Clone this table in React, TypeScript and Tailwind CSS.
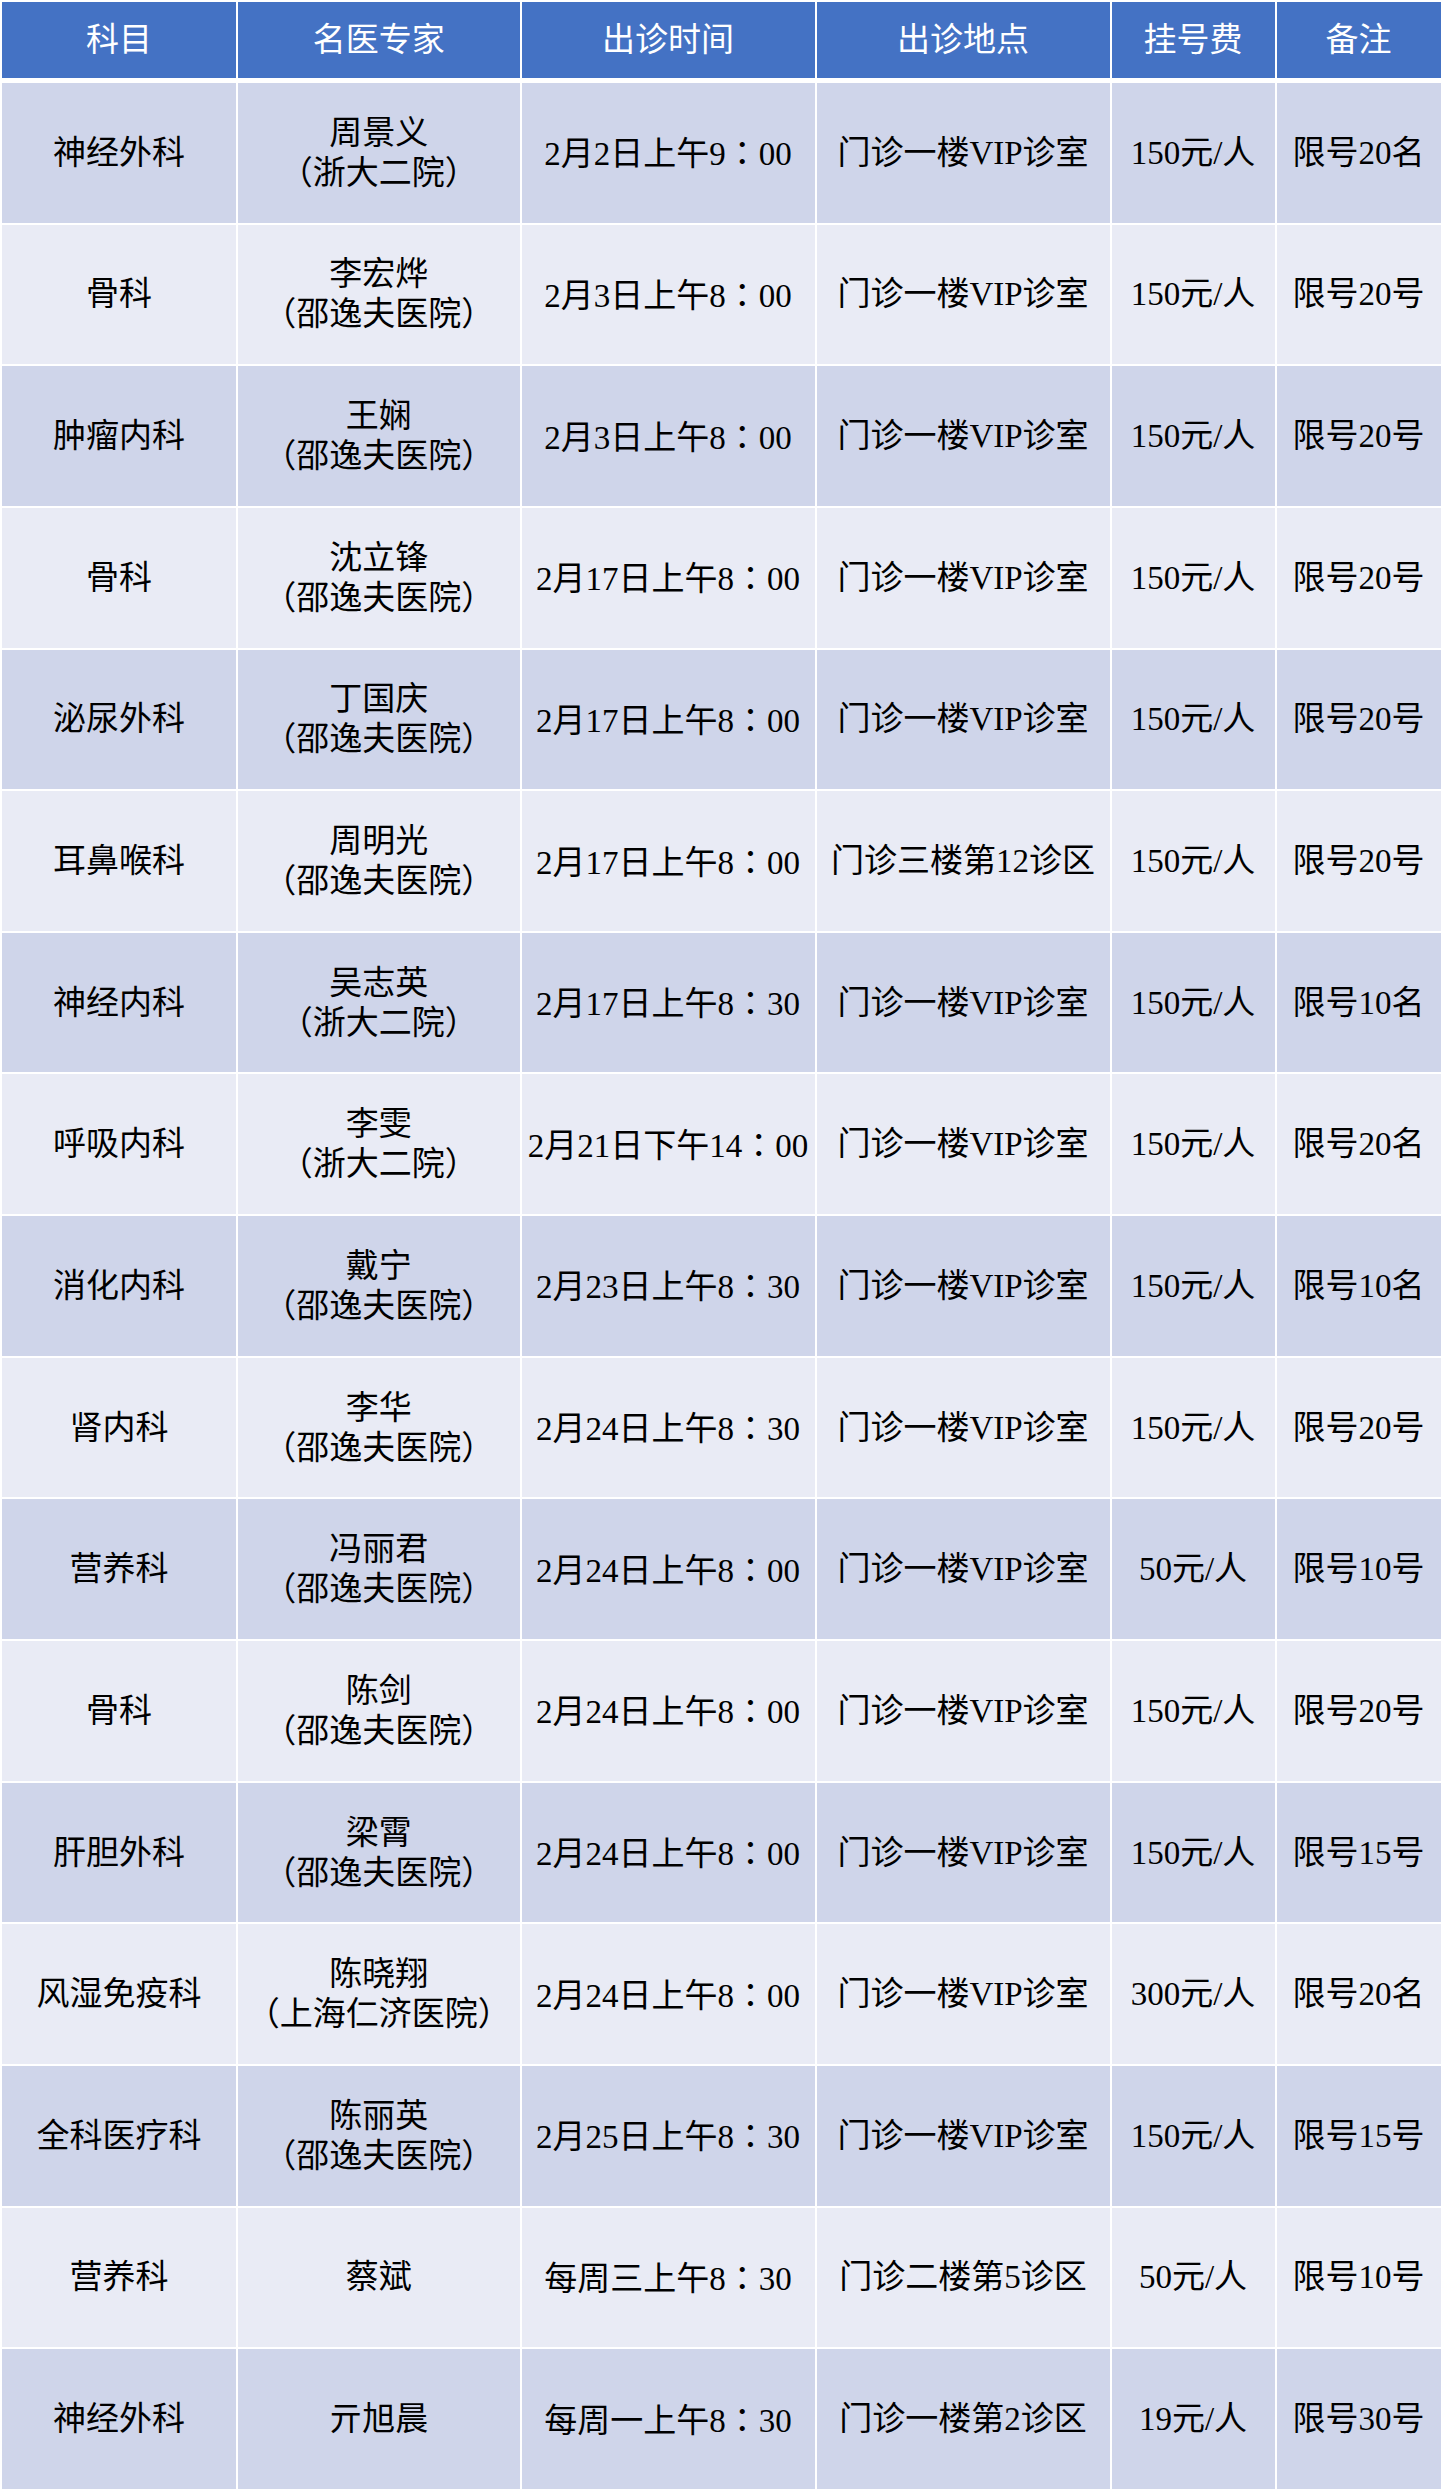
import React from 'react';

type Row = {
  dept: string;
  doctor: string;
  hospital?: string;
  time: string;
  place: string;
  fee: string;
  note: string;
};

const headers = ['科目', '名医专家', '出诊时间', '出诊地点', '挂号费', '备注'];

const rows: Row[] = [
  { dept: '神经外科', doctor: '周景义', hospital: '（浙大二院）', time: '2月2日上午9：00', place: '门诊一楼VIP诊室', fee: '150元/人', note: '限号20名' },
  { dept: '骨科', doctor: '李宏烨', hospital: '（邵逸夫医院）', time: '2月3日上午8：00', place: '门诊一楼VIP诊室', fee: '150元/人', note: '限号20号' },
  { dept: '肿瘤内科', doctor: '王娴', hospital: '（邵逸夫医院）', time: '2月3日上午8：00', place: '门诊一楼VIP诊室', fee: '150元/人', note: '限号20号' },
  { dept: '骨科', doctor: '沈立锋', hospital: '（邵逸夫医院）', time: '2月17日上午8：00', place: '门诊一楼VIP诊室', fee: '150元/人', note: '限号20号' },
  { dept: '泌尿外科', doctor: '丁国庆', hospital: '（邵逸夫医院）', time: '2月17日上午8：00', place: '门诊一楼VIP诊室', fee: '150元/人', note: '限号20号' },
  { dept: '耳鼻喉科', doctor: '周明光', hospital: '（邵逸夫医院）', time: '2月17日上午8：00', place: '门诊三楼第12诊区', fee: '150元/人', note: '限号20号' },
  { dept: '神经内科', doctor: '吴志英', hospital: '（浙大二院）', time: '2月17日上午8：30', place: '门诊一楼VIP诊室', fee: '150元/人', note: '限号10名' },
  { dept: '呼吸内科', doctor: '李雯', hospital: '（浙大二院）', time: '2月21日下午14：00', place: '门诊一楼VIP诊室', fee: '150元/人', note: '限号20名' },
  { dept: '消化内科', doctor: '戴宁', hospital: '（邵逸夫医院）', time: '2月23日上午8：30', place: '门诊一楼VIP诊室', fee: '150元/人', note: '限号10名' },
  { dept: '肾内科', doctor: '李华', hospital: '（邵逸夫医院）', time: '2月24日上午8：30', place: '门诊一楼VIP诊室', fee: '150元/人', note: '限号20号' },
  { dept: '营养科', doctor: '冯丽君', hospital: '（邵逸夫医院）', time: '2月24日上午8：00', place: '门诊一楼VIP诊室', fee: '50元/人', note: '限号10号' },
  { dept: '骨科', doctor: '陈剑', hospital: '（邵逸夫医院）', time: '2月24日上午8：00', place: '门诊一楼VIP诊室', fee: '150元/人', note: '限号20号' },
  { dept: '肝胆外科', doctor: '梁霄', hospital: '（邵逸夫医院）', time: '2月24日上午8：00', place: '门诊一楼VIP诊室', fee: '150元/人', note: '限号15号' },
  { dept: '风湿免疫科', doctor: '陈晓翔', hospital: '（上海仁济医院）', time: '2月24日上午8：00', place: '门诊一楼VIP诊室', fee: '300元/人', note: '限号20名' },
  { dept: '全科医疗科', doctor: '陈丽英', hospital: '（邵逸夫医院）', time: '2月25日上午8：30', place: '门诊一楼VIP诊室', fee: '150元/人', note: '限号15号' },
  { dept: '营养科', doctor: '蔡斌', time: '每周三上午8：30', place: '门诊二楼第5诊区', fee: '50元/人', note: '限号10号' },
  { dept: '神经外科', doctor: '亓旭晨', time: '每周一上午8：30', place: '门诊一楼第2诊区', fee: '19元/人', note: '限号30号' },
];

const cols = 'grid grid-cols-[234px_281.5px_293px_293px_163px_164px] gap-x-[2px]';

// full-width colon drawn with the JP face so it sits centred like the original
const Time = ({ value }: { value: string }) => {
  const [before, after] = value.split('：');
  return (
    <span>
      {before}
      <span className="font-['Noto_Sans_CJK_JP']">：</span>
      {after}
    </span>
  );
};

const App: React.FC = () => {
  return (
    <div className="w-[1443px] bg-white p-[2px] font-['Liberation_Serif','Noto_Sans_CJK_SC',serif] text-[33px] leading-[40px] text-black">
      <div className="flex flex-col gap-[2px]">
        <div className={`${cols} mb-[3px]`}>
          {headers.map((h) => (
            <div key={h} className="h-[76px] flex items-center justify-center bg-[#4472c4] text-white">
              {h}
            </div>
          ))}
        </div>
        {rows.map((r, i) => {
          const bg = i % 2 === 0 ? 'bg-[#cfd5ea]' : 'bg-[#e9ebf5]';
          const cell = `h-[139.65px] flex flex-col items-center justify-center text-center whitespace-nowrap ${bg}`;
          return (
            <div key={i} className={cols}>
              <div className={cell}>{r.dept}</div>
              <div className={cell}>
                <span>{r.doctor}</span>
                {r.hospital && <span>{r.hospital}</span>}
              </div>
              <div className={cell}>
                <Time value={r.time} />
              </div>
              <div className={cell}>{r.place}</div>
              <div className={cell}>{r.fee}</div>
              <div className={cell}>{r.note}</div>
            </div>
          );
        })}
      </div>
    </div>
  );
};

export default App;
